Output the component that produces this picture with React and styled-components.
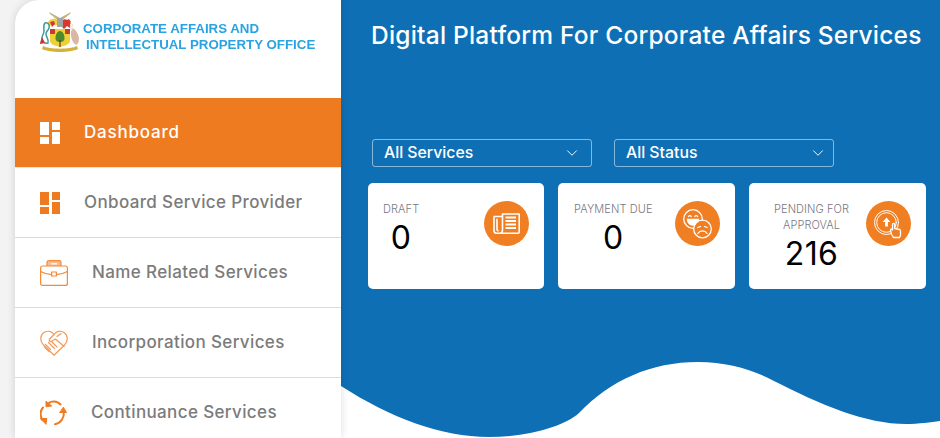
import * as React from "react";
import styled, { createGlobalStyle } from "styled-components";
import { ChevronDown } from "lucide-react";

const GlobalStyle = createGlobalStyle`
  html, body {
    margin: 0;
    height: 100%;
    overflow: hidden;
    background: #f3f3f3;
    font-family: "Inter", "Liberation Sans", sans-serif;
  }
`;

const Page = styled.div`
  display: flex;
  width: 940px;
  height: 438px;
  padding-left: 15px;
  box-sizing: border-box;
  overflow: hidden;
`;

const Sidebar = styled.aside`
  position: relative;
  z-index: 2;
  flex: 0 0 326px;
  background: #fff;
  border-top-left-radius: 24px;
  box-shadow: 0 0 8px rgba(0, 0, 0, 0.14);
`;

const Brand = styled.div`
  display: flex;
  align-items: flex-start;
  height: 98px;
  padding: 11px 0 0 25px;
  box-sizing: border-box;
  svg {
    flex: none;
    filter: blur(0.4px);
  }
`;

const BrandText = styled.div`
  margin-left: 3px;
  padding-top: 10px;
  color: #2aa3e2;
  font-family: "Liberation Sans", Arial, sans-serif;
  font-size: 13.3px;
  font-weight: 700;
  line-height: 16px;
  white-space: nowrap;
  filter: blur(0.3px);
  span {
    display: block;
  }
  span + span {
    margin-left: 3px;
  }
`;

const Row = styled.div`
  display: flex;
  align-items: center;
  height: 70px;
  padding-left: 25px;
  box-sizing: border-box;
  border-bottom: 1px solid ${(p) => (p.$active ? "#f6e3d3" : "#dcdcdc")};
  background: ${(p) => (p.$active ? "#ef7b21" : "#fff")};
  color: ${(p) => (p.$active ? "#fff" : "#7b7b7b")};
  font-size: 17px;
  font-weight: ${(p) => (p.$active ? 500 : 450)};
  letter-spacing: ${(p) => (p.$active ? "0.8px" : "0.37px")};
`;

const RowIcon = styled.span`
  display: flex;
  flex: 0 0 ${(p) => p.$slot}px;
  svg {
    display: block;
  }
`;

const RowLabel = styled.span`
  padding-bottom: 2px;
`;

const Main = styled.main`
  flex: 1;
  display: flex;
  flex-direction: column;
  min-width: 0;
  background: #0f6fb5;
`;

const Title = styled.h1`
  margin: 0;
  padding: 20px 0 0 30px;
  color: #fff;
  font-size: 24.5px;
  font-weight: 500;
  line-height: 30px;
  letter-spacing: 0.22px;
  white-space: nowrap;
`;

const Filters = styled.div`
  display: flex;
  gap: 22px;
  margin: 89px 0 0 31px;
`;

const Select = styled.div`
  display: flex;
  align-items: center;
  justify-content: space-between;
  width: 220px;
  height: 28px;
  padding: 0 ${(p) => p.$arrowInset}px 2px 11px;
  box-sizing: border-box;
  border: 1px solid rgba(255, 255, 255, 0.5);
  border-radius: 3px;
  color: #fff;
  font-size: 15.8px;
  font-weight: 500;
  svg {
    margin-top: 2px;
  }
`;

const Cards = styled.div`
  display: flex;
  gap: 14px;
  margin: 16px 0 0 27px;
`;

const Card = styled.div`
  display: flex;
  justify-content: space-between;
  align-items: flex-start;
  width: ${(p) => p.$width}px;
  height: 106px;
  padding: 18px 15px 0 ${(p) => p.$inset}px;
  box-sizing: border-box;
  background: #fff;
  border-radius: 5px;
`;

const Stat = styled.div`
  text-align: center;
`;

const StatLabel = styled.div`
  color: #77777f;
  font-size: 11px;
  font-weight: 300;
  line-height: 16px;
  letter-spacing: 0.1px;
`;

const StatValue = styled.div`
  padding-top: 1px;
  color: #000;
  font-size: 32px;
  font-weight: 400;
  line-height: 40px;
  letter-spacing: 0.4px;
`;

const Badge = styled.div`
  flex: none;
  width: 45px;
  height: 45px;
  border-radius: 50%;
  background: #f07f24;
  svg {
    display: block;
  }
`;

const Wave = styled.svg`
  display: block;
  flex: none;
  margin-top: auto;
`;

const Tiles = ({ color }) => (
  <svg width="20" height="22" viewBox="0 0 20 22" fill={color}>
    <rect x="0" y="0" width="9" height="13" />
    <rect x="12" y="0" width="8" height="8" />
    <rect x="0" y="15" width="9" height="7" />
    <rect x="12" y="10" width="8" height="12" />
  </svg>
);

const Briefcase = () => (
  <svg width="28" height="26" viewBox="0 0 28 26" fill="none" stroke="#f28a3c" strokeWidth="1.2" strokeLinejoin="round">
    <path d="M7 6V2.2C7 1 8 .6 9 .6h10c1 0 2 .4 2 1.6V6" fill="#f7bd94" />
    <rect x=".6" y="6" width="26.8" height="19.4" rx="2" />
    <path d="M.6 11.5c4 2.2 8 3 11 3.2M27.4 11.5c-4 2.2-8 3-11 3.2" />
    <rect x="11.6" y="12" width="4.8" height="4" fill="#fff" />
    <path d="M11 3.8h6" stroke="#fff" />
  </svg>
);

const HeartHands = () => (
  <svg width="28" height="26" viewBox="0 0 28 26" fill="none" stroke="#f49a56" strokeWidth="1.2" strokeLinecap="round" strokeLinejoin="round">
    <path d="M14 25.2 3.5 15C-.5 11 0 5 4 2.5 8 0 12 1.500 14 4.500 16 1.500 20 0 24 2.500 28 5 28.500 11 24.500 15Z" />
    <path d="M14 4.500 9.500 9c-1 1.500.5 3 2 2.500l4-2.500L24 16.500" />
    <path d="M17 6.500l4-3M5.500 14.500l5 5M8.500 12.500l6 6M4.500 17l4.500 4.500M11.500 11.500l5.500 5.500" />
  </svg>
);

const Cycle = () => (
  <svg width="27" height="26" viewBox="0 0 27 26" fill="none" stroke="#ef7b21" strokeWidth="2" strokeLinecap="round">
    <path d="M8.500 3.200C11 1.200 17 .4 20.500 4.500" />
    <path d="M6 6.500V1.200l5.500 4.500Z" fill="#ef7b21" strokeWidth="1" strokeLinejoin="round" />
    <path d="M23.800 12c.6 5-2.500 11-8.800 12.300" />
    <path d="M20 12.500h6.500l-3-5Z" fill="#ef7b21" strokeWidth="1" strokeLinejoin="round" />
    <path d="M2 19.500C.2 15.500.4 10.500 3 7.500" />
    <path d="M.6 18.500H6.800L6 24Z" fill="#ef7b21" strokeWidth="1" strokeLinejoin="round" />
  </svg>
);

// blurry in the reference, so only the main masses of the crest are drawn
const CoatOfArms = () => (
  <svg width="40" height="42" viewBox="0 0 40 42">
    <path d="M9 1l11 6 11-6-1 2-9 7h-2L10 3Z" fill="#c2b27c" />
    <path d="M13 8c2-1 4 0 5 2v4h-7l-2 3-2-4c1-3 3-5 6-5Z" fill="#eed143" />
    <path d="M10 11l4-1 1 3-3 3Z" fill="#d8362f" />
    <path d="M23 9c2-2 4 1 6-1l2 3-1 1 3 2-3 3-3-2-3 3-2-2Z" fill="#d8362f" />
    <path d="M17 7h6v9h-6Z" fill="#a4a4a4" />
    <path d="M10 18h20v12c0 3-5 5-10 6-5-1-10-3-10-6Z" fill="#efd035" />
    <path d="M10 18h5v5h-5ZM25 18h5v5h-5Z" fill="#c83a2c" />
    <path d="M20 20c3 0 4.500 4 4.500 7s-2 4-4.500 4-4.500-1-4.500-4 1.500-7 4.500-7Z" fill="#4c8a2c" />
    <path d="M19.400 29h1.200v7h-1.200Z" fill="#5b3d1d" />
    <path d="M5 12c3-1 5 2 4 5s-3 3-3 6 3 5 2 9c-3 1-6-1-6-5 0-3 2-4 2-7s-1-6 1-8Z" fill="#fff" stroke="#3e9a9c" strokeWidth="1.500" />
    <path d="M2 26c-1 3-2 5-2 7l5-1Z" fill="#c9342f" />
    <path d="M31 17c4 0 7 5 8 10 0 4-1 6-3 7-3-2-5-6-5-10Z" fill="#d9b7a3" />
    <path d="M30 13c2-1 3 0 3 2l-1 5-2-1Z" fill="#f1ede5" />
    <path d="M3 35c6 3.500 28 3.500 34 0l1 3c-8 4-28 4-36 0Z" fill="#d4b13c" />
  </svg>
);

const PaperIcon = () => (
  <svg width="45" height="45" viewBox="0 0 45 45" fill="none" stroke="#fff" strokeWidth="1.6" strokeLinejoin="round">
    <path d="M18.500 15.500H10v14c0 1.800 1 2.800 2.500 2.800h21.500c.8 0 1.200-.4 1.200-1.200V13H18.500v16c0 1.800-1 3.300-3 3.300" />
    <path d="M13 17.800v10.500c0 1 .6 1.600 1.500 1.600" />
    <path d="M21.500 16.500h10.500M21.500 20h10.500M21.500 23.500h10.500M21.500 27h10.500" strokeWidth="2" />
  </svg>
);

const FacesIcon = () => (
  <svg width="45" height="45" viewBox="0 0 45 45" fill="none" stroke="#fff" strokeWidth="1.3" strokeLinecap="round">
    <circle cx="18" cy="18" r="9.300" />
    <path d="M12.500 18.500h11c0 3.500-2.500 5.500-5.500 5.500s-5.500-2-5.500-5.500Z" fill="#fff" />
    <path d="M13.500 15.500c.8-1.200 2-1.200 2.800 0M19.800 15.500c.8-1.200 2-1.200 2.800 0" />
    <circle cx="27.500" cy="28" r="8.800" fill="#f07f24" />
    <path d="M22.800 32.500c2.200-3.500 7-3.500 9.300 0" />
    <path d="M22.800 26.500l2.700-1M32.200 26.500l-2.700-1" />
  </svg>
);

const ApprovalIcon = () => (
  <svg width="45" height="45" viewBox="0 0 45 45" fill="none" stroke="#fff" strokeWidth="1" strokeLinecap="round" strokeLinejoin="round">
    <circle cx="20.500" cy="21.500" r="12" />
    <circle cx="20.500" cy="21.500" r="9.800" />
    <path d="M20.500 16.500l-3.800 4.500h2.400v4.500h2.800V21h2.400Z" fill="#fff" stroke="none" />
    <path d="M27.500 36.500c-1.700-1.800-2.700-3.500-3-7.500 0-1 1.500-1 2 0V23.500c0-1.500 2.200-1.500 2.200 0v4l4.800 1c.8.200 1 .8 1 1.500v4.500l-1 2Z" fill="#f07f24" strokeWidth="1.300" />
  </svg>
);

const menu = [
  { label: "Dashboard", icon: <Tiles color="#fff" />, slot: 44, active: true },
  { label: "Onboard Service Provider", icon: <Tiles color="#ef7b21" />, slot: 44 },
  { label: "Name Related Services", icon: <Briefcase />, slot: 52 },
  { label: "Incorporation Services", icon: <HeartHands />, slot: 52 },
  { label: "Continuance Services", icon: <Cycle />, slot: 51 },
];

const stats = [
  { label: "DRAFT", value: "0", icon: <PaperIcon />, width: 176, inset: 15 },
  { label: "PAYMENT DUE", value: "0", icon: <FacesIcon />, width: 177, inset: 16 },
  { label: ["PENDING FOR", <br key="br" />, "APPROVAL"], value: "216", icon: <ApprovalIcon />, width: 177, inset: 25 },
];

export default function App() {
  return (
    <>
      <GlobalStyle />
      <Page>
        <Sidebar>
          <Brand>
            <CoatOfArms />
            <BrandText>
              <span>CORPORATE AFFAIRS AND</span>
              <span>INTELLECTUAL PROPERTY OFFICE</span>
            </BrandText>
          </Brand>
          {menu.map((m) => (
            <Row key={m.label} $active={m.active}>
              <RowIcon $slot={m.slot}>{m.icon}</RowIcon>
              <RowLabel>{m.label}</RowLabel>
            </Row>
          ))}
        </Sidebar>
        <Main>
          <Title>Digital Platform For Corporate Affairs Services</Title>
          <Filters>
            <Select $arrowInset={10}>
              All Services
              <ChevronDown size={18} strokeWidth={1.25} />
            </Select>
            <Select $arrowInset={6}>
              All Status
              <ChevronDown size={18} strokeWidth={1.25} />
            </Select>
          </Filters>
          <Cards>
            {stats.map((s) => (
              <Card key={s.value + s.inset} $width={s.width} $inset={s.inset}>
                <Stat>
                  <StatLabel>{s.label}</StatLabel>
                  <StatValue>{s.value}</StatValue>
                </Stat>
                <Badge>{s.icon}</Badge>
              </Card>
            ))}
          </Cards>
          <Wave width="599" height="78" viewBox="0 0 599 78">
            <path
              fill="#fff"
              d="M0 26C50 58 100 77 148 77C190 77 225 65 238 53C270 20 310 2 357 2C385 2 410 9 431 20C480 45 525 64 565 64C578 64 590 62 599 61V78H0Z"
            />
          </Wave>
        </Main>
      </Page>
    </>
  );
}
